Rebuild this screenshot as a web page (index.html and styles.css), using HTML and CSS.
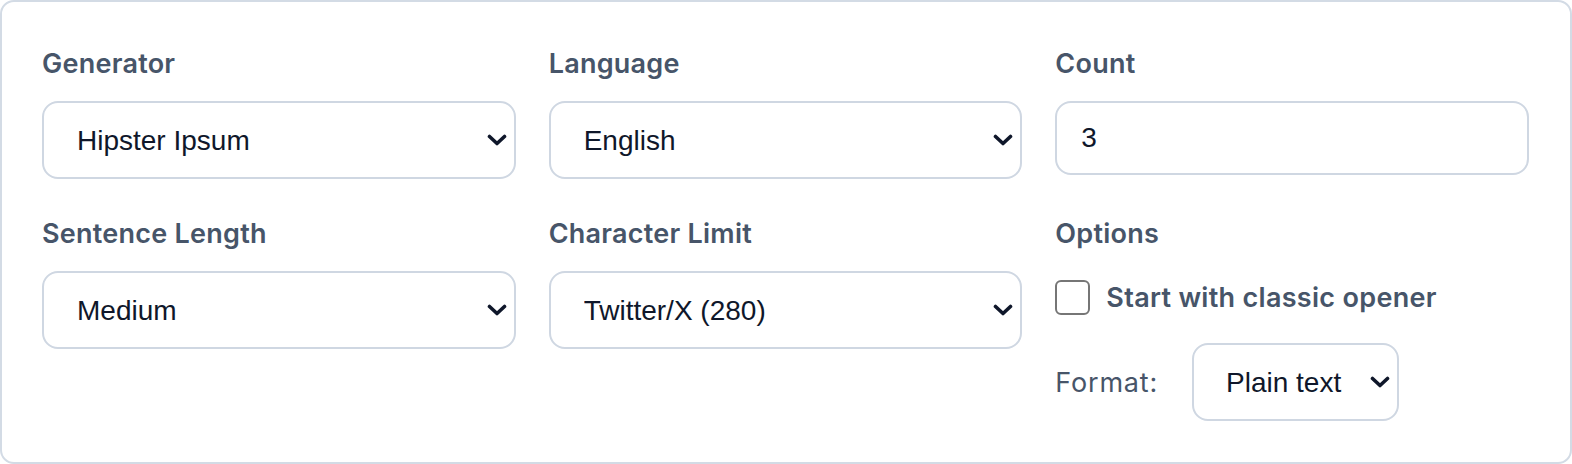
FILE: index.html
```html
<!DOCTYPE html>
<html lang="en">
<head>
    <meta charset="UTF-8">
    <meta name="viewport" content="width=device-width, initial-scale=1.0">
    <title>Ipsum Generator</title>
    <link rel="stylesheet" href="styles.css">
</head>
<body>

<div class="panel">
    <div class="field">
        <label class="field-label" for="generator">Generator</label>
        <div class="select-wrap">
            <select id="generator">
                <option>Hipster Ipsum</option>
                <option>Lorem Ipsum</option>
            </select>
            <svg class="chevron" viewBox="0 0 20 12"><path d="M2.5 2.5 L10 9.5 L17.5 2.5"/></svg>
        </div>
    </div>

    <div class="field">
        <label class="field-label" for="language">Language</label>
        <div class="select-wrap">
            <select id="language">
                <option>English</option>
            </select>
            <svg class="chevron" viewBox="0 0 20 12"><path d="M2.5 2.5 L10 9.5 L17.5 2.5"/></svg>
        </div>
    </div>

    <div class="field">
        <label class="field-label" for="count">Count</label>
        <input id="count" class="count-input" type="text" value="3">
    </div>

    <div class="field">
        <label class="field-label" for="length">Sentence Length</label>
        <div class="select-wrap">
            <select id="length">
                <option>Medium</option>
            </select>
            <svg class="chevron" viewBox="0 0 20 12"><path d="M2.5 2.5 L10 9.5 L17.5 2.5"/></svg>
        </div>
    </div>

    <div class="field">
        <label class="field-label" for="limit">Character Limit</label>
        <div class="select-wrap">
            <select id="limit">
                <option>Twitter/X (280)</option>
            </select>
            <svg class="chevron" viewBox="0 0 20 12"><path d="M2.5 2.5 L10 9.5 L17.5 2.5"/></svg>
        </div>
    </div>

    <div class="field">
        <div class="field-label options-label">Options</div>
        <label class="check-row">
            <input type="checkbox" class="check">
            <span>Start with classic opener</span>
        </label>
        <div class="format-row">
            <span class="format-label">Format:</span>
            <div class="select-wrap format-wrap">
                <select id="format">
                    <option>Plain text</option>
                </select>
                <svg class="chevron" viewBox="0 0 20 12"><path d="M2.5 2.5 L10 9.5 L17.5 2.5"/></svg>
            </div>
        </div>
    </div>
</div>

</body>
</html>
```

FILE: styles.css
```css
body {
    margin: 0;
    background-color: white;
    font-family: Inter, "Noto Sans", sans-serif;
}
.panel {
    box-sizing: border-box;
    width: 1572px;
    height: 464px;
    border: 2px solid #d3dbe5;
    border-radius: 14px;
    padding: 46px 41px 41px 40px;
    display: grid;
    grid-template-columns: repeat(3, 1fr);
    column-gap: 33px;
    row-gap: 39px;
    align-items: start;
}
.field {
    display: flex;
    flex-direction: column;
}
.field-label {
    font-size: 27px;
    font-weight: 600;
    letter-spacing: 0.25px;
    line-height: 32px;
    color: #475569;
    margin-bottom: 21px;
}
.options-label {
    margin-bottom: 30px;
}
.select-wrap {
    position: relative;
}
.select-wrap select {
    appearance: none;
    -webkit-appearance: none;
    box-sizing: border-box;
    width: 100%;
    height: 78px;
    border: 2px solid #cfd7e2;
    border-radius: 16px;
    background: white;
    padding: 0 50px 0 33px;
    font-family: "Liberation Sans", Arial, sans-serif;
    font-size: 28px;
    color: #0f172a;
    outline: none;
}
.chevron {
    position: absolute;
    right: 9px;
    top: 50%;
    width: 20px;
    height: 12px;
    margin-top: -6px;
    fill: none;
    stroke: #0f172a;
    stroke-width: 3.6;
    stroke-linecap: round;
    stroke-linejoin: round;
    pointer-events: none;
}
.count-input {
    box-sizing: border-box;
    width: 100%;
    height: 74px;
    border: 2px solid #cfd7e2;
    border-radius: 16px;
    padding: 0 24px;
    font-family: "Liberation Sans", Arial, sans-serif;
    font-size: 28px;
    color: #0f172a;
    outline: none;
}
.check-row {
    display: flex;
    align-items: center;
    height: 35px;
    font-size: 27px;
    font-weight: 600;
    letter-spacing: 0.3px;
    color: #475569;
}
.check {
    appearance: none;
    -webkit-appearance: none;
    box-sizing: border-box;
    width: 35px;
    height: 35px;
    margin: 0 16px 0 0;
    border: 2px solid #767676;
    border-radius: 6px;
    background: white;
}
.format-row {
    display: flex;
    align-items: center;
    margin-top: 28px;
}
.format-label {
    font-size: 27px;
    letter-spacing: 0.8px;
    color: #475569;
    margin-right: 34px;
}
.format-wrap {
    width: 207px;
}
.format-wrap select {
    padding-left: 32px;
}
```
